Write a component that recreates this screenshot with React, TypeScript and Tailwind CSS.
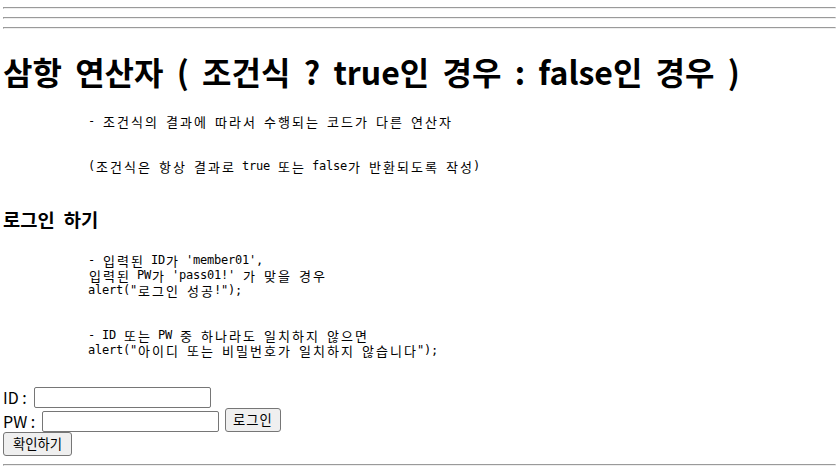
import React from "react";

function Hr({ className = "" }: { className?: string }) {
  return (
    <div
      className={`h-[2px] border-t border-b border-l border-r border-t-[#9a9a9a] border-l-[#9a9a9a] border-b-[#eeeeee] border-r-[#eeeeee] ${className}`}
    />
  );
}

const isWide = (c: string) => /[\uAC00-\uD7A3]/.test(c);

function MonoLine({ text }: { text: string }) {
  const chars = Array.from(text);
  return (
    <div className="flex h-[15px] leading-[15px] whitespace-pre overflow-visible">
      {chars.map((c, i) =>
        isWide(c) ? (
          <span
            key={i}
            className="inline-block w-[14px] shrink-0 text-center text-[13px]"
            style={{ fontFamily: '"Noto Sans CJK KR", sans-serif' }}
          >
            {c}
          </span>
        ) : (
          <span
            key={i}
            className="inline-block w-[7px] shrink-0 text-center text-[12px]"
            style={{ fontFamily: '"DejaVu Sans Mono", "Liberation Mono", monospace' }}
          >
            {c}
          </span>
        )
      )}
    </div>
  );
}

function Pre({ lines, className = "" }: { lines: string[]; className?: string }) {
  return (
    <div className={`pl-[85px] ${className}`}>
      {lines.map((l, i) => (
        <MonoLine key={i} text={l} />
      ))}
    </div>
  );
}

export default function App() {
  return (
    <div
      className="pl-[3px] pt-[7px] text-black bg-white min-h-[474px]"
      style={{ fontFamily: '"Noto Sans CJK KR", "Noto Sans", sans-serif' }}
    >
      <Hr />
      <Hr className="mt-[8px]" />
      <Hr className="mt-[8px]" />

      <h1 className="mt-[22px] h-[40px] text-[32px] leading-[40px] font-bold whitespace-nowrap [word-spacing:6px]">
        삼항 연산자 ( 조건식 ? true인 경우 : false인 경우 )
      </h1>

      <Pre
        className="mt-[23px]"
        lines={[
          "- 조건식의 결과에 따라서 수행되는 코드가 다른 연산자",
          "",
          "",
          "(조건식은 항상 결과로 true 또는 false가 반환되도록 작성)",
        ]}
      />

      <h3 className="mt-[33px] h-[24px] text-[18.72px] leading-[24px] font-bold [word-spacing:5px]">
        로그인 하기
      </h3>

      <Pre
        className="mt-[22px]"
        lines={[
          "- 입력된 ID가 'member01',",
          "입력된 PW가 'pass01!' 가 맞을 경우",
          'alert("로그인 성공!");',
          "",
          "",
          "- ID 또는 PW 중 하나라도 일치하지 않으면",
          'alert("아이디 또는 비밀번호가 일치하지 않습니다");',
        ]}
      />

      <div className="mt-[29px] text-[16px]">
        <div className="flex items-end h-[21px]">
          <span className="w-[31px] leading-[21px]">ID :</span>
          <input className="w-[177px] h-[21px] border border-[#767676] rounded-[2px] bg-white" />
        </div>
        <div className="flex items-end h-[24px]">
          <span className="w-[39px] leading-[21px]">PW :</span>
          <input className="w-[177px] h-[21px] border border-[#767676] rounded-[2px] bg-white" />
          <button className="ml-[6px] w-[56px] h-[24px] border border-[#767676] rounded-[3px] bg-[#efefef] text-[13.33px] leading-[20px] tracking-[1px]">
            로그인
          </button>
        </div>
        <div className="flex items-end h-[24px]">
          <button className="w-[69px] h-[24px] border border-[#767676] rounded-[3px] bg-[#efefef] text-[13.33px] leading-[20px]">
            확인하기
          </button>
        </div>
      </div>

      <Hr className="mt-[8px]" />
    </div>
  );
}
